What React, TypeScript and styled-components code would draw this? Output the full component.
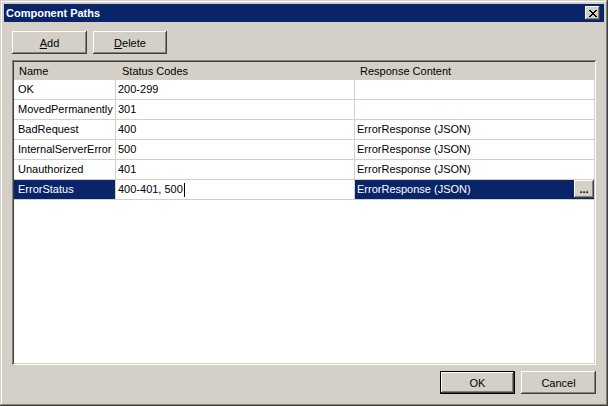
import React from 'react';
import styled, { createGlobalStyle } from 'styled-components';

const GlobalStyle = createGlobalStyle`
  html, body {
    margin: 0;
    padding: 0;
    background: #d4d0c8;
  }
  body {
    font-family: "Liberation Sans", Arial, sans-serif;
    font-size: 11px;
    color: #000;
  }
`;

const Window = styled.div`
  width: 608px;
  height: 406px;
  box-sizing: border-box;
  padding: 4px;
  background: #d4d0c8;
  box-shadow:
    inset -1px -1px #404040,
    inset 1px 1px #d4d0c8,
    inset -2px -2px #808080,
    inset 2px 2px #ffffff;
  display: flex;
  flex-direction: column;
`;

const TitleBar = styled.div`
  height: 18px;
  background: #0a246a;
  display: flex;
  align-items: center;
  justify-content: space-between;
  padding: 0 2px 0 2px;
`;

const Title = styled.span`
  color: #fff;
  font-weight: bold;
  font-size: 11px;
  line-height: 18px;
  padding-left: 0;
`;

const CloseButton = styled.button`
  width: 15px;
  height: 14px;
  padding: 0;
  margin-right: 2px;
  border: none;
  background: #d4d0c8;
  box-shadow:
    inset -1px -1px #404040,
    inset 1px 1px #ffffff,
    inset -2px -2px #808080,
    inset 2px 2px #d4d0c8;
  display: flex;
  align-items: center;
  justify-content: center;
`;

const Body = styled.div`
  flex: 1;
  display: flex;
  flex-direction: column;
  padding: 9px 8px 8px 8px;
  gap: 6px;
`;

const Toolbar = styled.div`
  display: flex;
  gap: 6px;
`;

const Footer = styled.div`
  display: flex;
  justify-content: flex-end;
  gap: 6px;
  padding-top: 0;
`;

const Btn = styled.button<{ $default?: boolean; $w?: number }>`
  width: ${p => p.$w ?? 75}px;
  height: 23px;
  padding: 0;
  border: ${p => (p.$default ? '1px solid #000' : 'none')};
  background: #d4d0c8;
  font-family: "Liberation Sans", Arial, sans-serif;
  font-size: 11px;
  color: #000;
  box-shadow:
    inset -1px -1px #404040,
    inset 1px 1px #ffffff,
    inset -2px -2px #808080,
    inset 2px 2px #d4d0c8;
  u {
    text-decoration: underline;
  }
`;

const Grid = styled.div`
  flex: 1;
  background: #fff;
  padding: 2px;
  box-shadow:
    inset 1px 1px #808080,
    inset -1px -1px #ffffff,
    inset 2px 2px #404040,
    inset -2px -2px #d4d0c8;
  display: flex;
  flex-direction: column;
  margin-bottom: 0;
`;

const Row = styled.div<{ $header?: boolean }>`
  display: grid;
  grid-template-columns: 102px 239px 1fr;
  height: ${p => (p.$header ? 18 : 20)}px;
  background: ${p => (p.$header ? '#d4d0c8' : '#fff')};
`;

const HeaderCell = styled.div<{ $pad: number }>`
  padding-left: ${p => p.$pad}px;
  line-height: 19px;
  white-space: nowrap;
  overflow: hidden;
`;

const Cell = styled.div<{ $pad: number; $selected?: boolean; $last?: boolean }>`
  position: relative;
  box-sizing: border-box;
  padding-left: ${p => p.$pad}px;
  line-height: 19px;
  white-space: nowrap;
  overflow: hidden;
  border-bottom: 1px solid #d4d0c8;
  border-right: ${p => (p.$last ? 'none' : '1px solid #d4d0c8')};
  background: ${p => (p.$selected ? '#0a246a' : 'transparent')};
  color: ${p => (p.$selected ? '#fff' : '#000')};
  display: flex;
  align-items: center;
`;

const Caret = styled.span`
  display: inline-block;
  width: 1px;
  height: 14px;
  background: #000;
  margin-left: 1px;
`;

const EllipsisButton = styled.button`
  position: absolute;
  right: 0;
  top: 0;
  width: 20px;
  height: 18px;
  padding: 0;
  border: none;
  background: #d4d0c8;
  font-family: "Liberation Sans", Arial, sans-serif;
  font-size: 11px;
  font-weight: bold;
  line-height: 18px;
  color: #000;
  box-shadow:
    inset -1px -1px #404040,
    inset 1px 1px #ffffff,
    inset -2px -2px #808080,
    inset 2px 2px #d4d0c8;
`;

type PathRow = { name: string; codes: string; content: string };

const rows: PathRow[] = [
  { name: 'OK', codes: '200-299', content: '' },
  { name: 'MovedPermanently', codes: '301', content: '' },
  { name: 'BadRequest', codes: '400', content: 'ErrorResponse (JSON)' },
  { name: 'InternalServerError', codes: '500', content: 'ErrorResponse (JSON)' },
  { name: 'Unauthorized', codes: '401', content: 'ErrorResponse (JSON)' },
  { name: 'ErrorStatus', codes: '400-401, 500', content: 'ErrorResponse (JSON)' },
];

const selectedIndex = 5;

export default function App() {
  return (
    <>
      <GlobalStyle />
      <Window>
        <TitleBar>
          <Title>Component Paths</Title>
          <CloseButton aria-label="Close">
            <svg width="8" height="7" viewBox="0 0 8 7" shapeRendering="crispEdges">
              <path
                fill="#000"
                d="M0 0h2v1H0zM6 0h2v1H6zM1 1h2v1H1zM5 1h2v1H5zM2 2h4v1H2zM3 3h2v1H3zM2 4h4v1H2zM1 5h2v1H1zM5 5h2v1H5zM0 6h2v1H0zM6 6h2v1H6z"
              />
            </svg>
          </CloseButton>
        </TitleBar>
        <Body>
          <Toolbar>
            <Btn>
              <u>A</u>dd
            </Btn>
            <Btn $w={74}>
              <u>D</u>elete
            </Btn>
          </Toolbar>
          <Grid>
            <Row $header>
              <HeaderCell $pad={5}>Name</HeaderCell>
              <HeaderCell $pad={6}>Status Codes</HeaderCell>
              <HeaderCell $pad={5}>Response Content</HeaderCell>
            </Row>
            {rows.map((r, i) => {
              const sel = i === selectedIndex;
              return (
                <Row key={r.name}>
                  <Cell $pad={4} $selected={sel}>
                    {r.name}
                  </Cell>
                  <Cell $pad={2}>
                    {r.codes}
                    {sel && <Caret />}
                  </Cell>
                  <Cell $pad={2} $selected={sel} $last>
                    {r.content}
                    {sel && <EllipsisButton>...</EllipsisButton>}
                  </Cell>
                </Row>
              );
            })}
          </Grid>
          <Footer>
            <Btn $default>OK</Btn>
            <Btn>Cancel</Btn>
          </Footer>
        </Body>
      </Window>
    </>
  );
}
